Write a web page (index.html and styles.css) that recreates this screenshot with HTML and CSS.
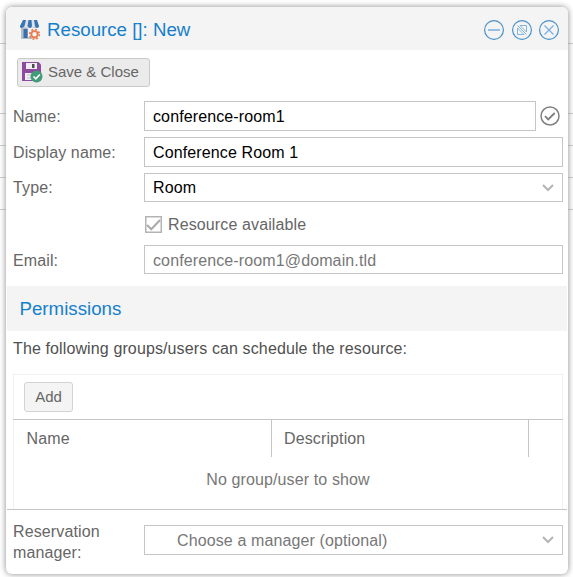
FILE: index.html
```html
<!DOCTYPE html>
<html lang="en">
<head>
<meta charset="utf-8">
<title>Resource</title>
<link rel="stylesheet" href="styles.css">
</head>
<body>
<section class="dialog">
  <header class="titlebar">
    <svg class="shop" width="22" height="22" viewBox="0 0 22 22">
      <path d="M2 8v12h11v-2H9V9h7V8z" fill="#b5bdc6"/>
      <path d="M4.500 10h4v9h-4z" fill="#356fae"/><path d="M9 9h7v3l-4 4H9z" fill="#f0f2f4"/>
      <path d="M4 1h14l2 6q0 2-2 2T15 8q0 1-2 1T11 8q0 1-2 1T6 8q-1 1-3 1T1 7z" fill="#dde1e5"/>
      <path d="M4 1h3L5.500 7Q4.500 9 2.500 9T1 7zM9.500 1h3L13 7q-.5 2-2 2T8.500 7zM15 1h3l2 6q0 2-2 2T16 7z" fill="#3975b5"/>
      <g stroke="#e97b50" fill="none"><circle cx="15.500" cy="15.300" r="3.200" stroke-width="1.900"/><circle cx="15.500" cy="15.300" r="4.800" stroke-width="1.700" stroke-dasharray="1.900 1.870"/></g>
    </svg>
    <h1>Resource []: New</h1>
    <svg class="tools" width="76" height="22" viewBox="0 0 76 22" fill="none" stroke="#4b91c8" stroke-width="1.200">
      <circle cx="11" cy="11" r="9.400"/><circle cx="39" cy="11" r="9.400"/><circle cx="66" cy="11" r="9.400"/>
      <g stroke="#76aee0"><path d="M5 11h12" stroke-width="1.500"/><path d="M34.500 9v6.500H41M37 6.500h6.500V13M34.500 6.500l9 9M37 6.500l6.500 6.500M34.500 9l6.500 6.500" stroke-width=".9"/><path d="M61.500 6.500l9 9m0-9l-9 9"/></g>
    </svg>
  </header>
  <div class="toolbar">
    <button class="save">
      <svg width="21" height="21" viewBox="0 0 21 21">
        <path d="M0 0h16.500L19 2.500V19H0z" fill="#8d4a9e"/><path d="M4 1h11v6H4zM3 11h13v7H3z" fill="#f1eef2"/><path d="M10 2h2.500v4H10z" fill="#4b4b4b"/><path d="M5 13h9M5 16h6" stroke="#c9c3cd"/>
        <circle cx="14.500" cy="14.500" r="6" fill="#439b79"/><path d="M11.500 14.500l2.300 2.300 4-4.300" fill="none" stroke="#fff" stroke-width="1.700"/>
      </svg>
      <span>Save &amp; Close</span>
    </button>
  </div>
  <div class="form">
    <div class="row"><span class="label">Name:</span><div class="field">conference-room1</div>
      <svg class="valid" width="20" height="20" viewBox="0 0 20 20" fill="none" stroke="#808080"><circle cx="10" cy="10" r="9" stroke-width="1.500"/><path d="M5 10.200l3.200 3.200 6.500-6.400" stroke-width="1.900"/></svg></div>
    <div class="row"><span class="label">Display name:</span><div class="field">Conference Room 1</div></div>
    <div class="row short"><span class="label">Type:</span><div class="field">Room<svg class="arrow" width="12" height="8" viewBox="0 0 12 8"><path d="M1 1l5 5 5-5"/></svg></div></div>
    <div class="row check"><svg width="17" height="17" viewBox="0 0 17 17" fill="none" stroke="#b4b4b4"><path d="M.75.75h15.500v15.500H.75z" stroke-width="1.500"/><path d="M2 9l4.300 4.300L15 4" stroke="#aaa" stroke-width="2"/></svg><span>Resource available</span></div>
    <div class="row short email"><span class="label">Email:</span><div class="field muted">conference-room1@domain.tld</div></div>
  </div>
  <h2>Permissions</h2>
  <p class="intro">The following groups/users can schedule the resource:</p>
  <div class="panel">
    <div class="actions"><button class="add">Add</button></div>
    <div class="columns"><span>Name</span><span>Description</span><span></span></div>
    <div class="empty">No group/user to show</div>
  </div>
  <footer><span class="label">Reservation<br>manager:</span><div class="field placeholder">Choose a manager (optional)<svg class="arrow" width="12" height="8" viewBox="0 0 12 8"><path d="M1 1l5 5 5-5"/></svg></div></footer>
</section>
</body>
</html>
```
FILE: styles.css
```css
* { box-sizing: border-box; }
body {
  margin: 0;
  height: 577px;
  padding: 7px 5px 3px 6px;
  overflow: hidden;
  font: 16px/21px "Liberation Sans", Arial, sans-serif;
  letter-spacing: .12px;
  color: #666;
  background:
    linear-gradient(#ccc, #ccc) 0 43px / 100% 1px no-repeat,
    linear-gradient(#ccc, #ccc) 0 113px / 100% 1px no-repeat,
    linear-gradient(#ccc, #ccc) 0 145px / 100% 1px no-repeat,
    linear-gradient(#ccc, #ccc) 0 177px / 100% 1px no-repeat,
    linear-gradient(#ccc, #ccc) 0 209px / 100% 1px no-repeat,
    #fff;
}
svg { display: block; flex: none; }
.dialog {
  height: 567px;
  padding: 0 1px;
  background: #fff;
  border-radius: 6px;
  box-shadow: 0 0 6px #888;
}
.titlebar {
  display: flex;
  align-items: center;
  height: 43px;
  margin: 0 -1px;
  padding: 2px 9px 0 13px;
  background: #f4f4f4;
  border-radius: 6px 6px 0 0;
}
h1, h2 { margin: 0; font-size: 18.7px; font-weight: 400; letter-spacing: 0; color: #157fcc; }
h1 { margin: -1px 0 0 6px; flex: 1; }
.toolbar { height: 51px; padding: 8px 10px; }
button { font: 15px/20px "Liberation Sans", Arial, sans-serif; color: #666; border: 1px solid #c9c9c9; border-radius: 3px; }
.save { display: flex; align-items: center; gap: 5px; width: 133px; height: 29px; padding: 0 4px; background: #ebebeb; white-space: nowrap; }
.save span { margin-top: -1px; }
.form { display: flex; flex-direction: column; gap: 6px; padding: 0 4px 0 6px; }
.row { display: flex; align-items: center; height: 30px; }
.short { height: 29px; }
.label { width: 131px; flex: none; }
.field { display: flex; align-items: center; flex: 1; height: 100%; padding: 0 8px; border: 1px solid #c5c5c5; color: #000; }
.muted, .placeholder { color: #777; }
.valid { margin: 0 3px 0 4px; }
.check { height: 31px; gap: 6px; padding: 1px 0 0 132px; }
.email .label, .muted { padding-top: 2px; }
.arrow { margin-left: auto; fill: none; stroke: #b5b5b5; stroke-width: 2; }
h2 { height: 45px; margin-top: 12px; padding-left: 12.5px; line-height: 45px; background: #f4f4f4; }
.intro { height: 43px; margin: 0; padding: 7px 6px 0; color: #505050; }
.panel { height: 135px; margin: 0 4px 0 6px; border: 1px solid #f1f1f1; border-bottom: 0; }
.actions { height: 44px; padding: 7px 10px; }
.add { width: 49px; height: 30px; padding: 0; background: #f4f4f4; border-color: #d3d3d3; }
.columns { display: grid; grid-template-columns: 258px 258px 1fr; height: 37px; margin: 0 -1px; border-top: 1px solid #c5c5c5; }
.columns span { padding: 8px 12px; border-right: 1px solid #c5c5c5; }
.columns span:first-child { border-right: 0; padding-left: 13.5px; }
.columns span:nth-child(2) { border-left: 1px solid #c5c5c5; }
.columns span:last-child { border: 0; }
.empty { padding-top: 13px; text-align: center; color: #777; }
footer { display: flex; height: 65px; padding: 11px 4px 0 6px; border-top: 1px solid #c5c5c5; }
footer .field { height: 30px; margin-top: 4px; padding-left: 32px; }
```
